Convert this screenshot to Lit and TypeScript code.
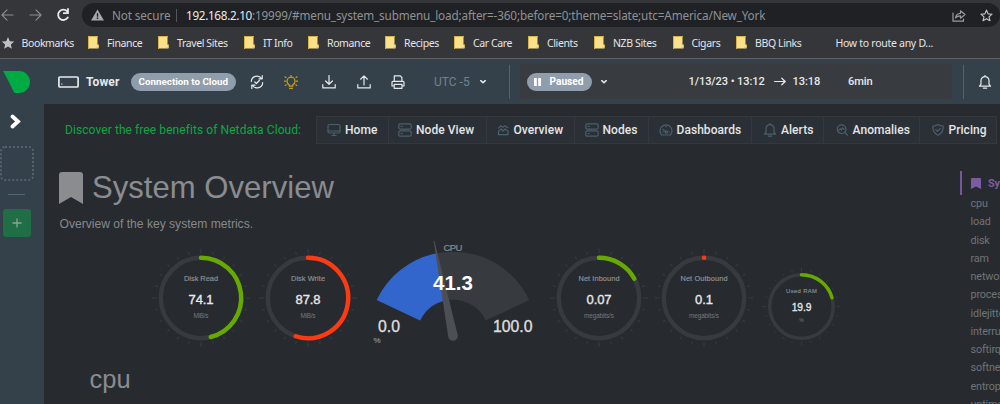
import { LitElement, html, svg, css } from "lit";
import { customElement, property } from "lit/decorators.js";

const BOOKMARKS = [
  { label: "Finance", width: 70 },
  { label: "Travel Sites", width: 86 },
  { label: "IT Info", width: 64 },
  { label: "Romance", width: 77 },
  { label: "Recipes", width: 69 },
  { label: "Car Care", width: 74 },
  { label: "Clients", width: 66 },
  { label: "NZB Sites", width: 78.5 },
  { label: "Cigars", width: 63.5 },
  { label: "BBQ Links", width: 80 },
];

const NAV = [
  { label: "Home", icon: "monitor", width: 71.5, pad: 10 },
  { label: "Node View", icon: "nodes", width: 98, pad: 9.5 },
  { label: "Overview", icon: "overview", width: 88.5, pad: 9 },
  { label: "Nodes", icon: "nodes", width: 74, pad: 9.5 },
  { label: "Dashboards", icon: "dashboard", width: 103, pad: 9.5 },
  { label: "Alerts", icon: "bell", width: 72, pad: 11 },
  { label: "Anomalies", icon: "anomalies", width: 96, pad: 10.5 },
  { label: "Pricing", icon: "shield", width: 76.5, pad: 10.5 },
];

const MENU = [
  "cpu", "load", "disk", "ram", "network", "processes",
  "idlejitter", "interrupts", "softirqs", "softnet", "entropy", "uptime",
];

const ICONS: Record<string, unknown> = {
  monitor: svg`<rect x="1" y="1.5" width="12" height="8.5" rx="1.5"/><path d="M1 8h12M5 12.5h4M7 10v2.5"/>`,
  nodes: svg`<rect x=".8" y=".8" width="12.4" height="5.3" rx="1.5"/><rect x=".8" y="7.9" width="12.4" height="5.3" rx="1.5"/><path d="M3.2 3.4h1M3.2 10.5h1"/>`,
  overview: svg`<path d="M2.5 5.2l2.2-2.4 2 1.6 2-1.6 3.3 2M2.5 8.4l2.6-2.4 2 2 2-2 2.9 2.2M2.5 8.4V11.6h9.5V8.2"/>`,
  dashboard: svg`<path d="M2.7 12a6 6 0 1 1 8.6 0zM4 6.5l3 2.6M7 3.2v.6M3.6 9h.6M9.8 9h.6"/><circle cx="7.4" cy="9" r="1.1"/>`,
  bell: svg`<path d="M1.5 11.2h11L11 9.2V5.6a4 4 0 0 0-8 0v3.6zM5.4 13.2h3.2M7 .4v1.2"/>`,
  anomalies: svg`<circle cx="6.6" cy="6.2" r="4.3"/><path d="M9.7 9.4l2.6 2.6M4 7.2l1.2-1.4 1.2 1 1.2-2 1.4 1.6"/>`,
  shield: svg`<path d="M7 1.6c1.7 1.1 3.4 1.5 5.2 1.4.2 4.2-1.2 7.4-5.2 9.3C3 10.4 1.6 7.2 1.8 3 3.6 3.1 5.3 2.7 7 1.6z"/><path d="M4.8 6.6l1.7 1.6 2.8-2.9"/>`,
  refresh: svg`<path d="M1.3 6.5A5.6 5.6 0 0 1 11.5 3.5M12.2.6v3.2H9M12.7 7.5A5.6 5.6 0 0 1 2.5 10.5M1.8 13.4v-3.2H5M4.8 7l1.6 1.5 2.9-3"/>`,
  bulb: svg`<path d="M5.2 9.8C3.6 8.9 3 7.7 3 6.2a4 4 0 0 1 8 0c0 1.5-.6 2.7-2.2 3.6v1.4H5.2zM5.6 13.3h2.8M7 .2v1M1 1.8l1 .8M13 1.8l-1 .8M.4 6.2h1.2M12.4 6.2h1.2M1.2 10.4l1-.6M12.8 10.4l-1-.6"/>`,
  download: svg`<path d="M7 .5v8.6M3.6 6L7 9.3 10.4 6M.8 9.6v3.3h12.4V9.6"/>`,
  upload: svg`<path d="M7 10V1M3.6 4.2L7 .9l3.4 3.3M.8 9.6v3.3h12.4V9.6"/>`,
  print: svg`<path d="M3.3 6.2V.9h6l1.6 1.6v3.7M2.8 11H1V7.3a1 1 0 0 1 1-1h10a1 1 0 0 1 1 1V11h-1.8M3.2 9.3h7.8v4H3.2z"/>`,
};

const icon = (name: string) =>
  html`<svg class="icon" viewBox="0 0 14 14" width="14" height="14">${ICONS[name]}</svg>`;

const caret = html`<svg class="icon caret" viewBox="0 0 6 4" width="6" height="4"><path d="M.8.6L3 2.8 5.2.6"/></svg>`;

const mark = (width: number, height: number) => html`
  <svg class="mark" viewBox="0 0 24 32" width=${width} height=${height} preserveAspectRatio="none">
    <path d="M0 32V3a3 3 0 0 1 3-3h18a3 3 0 0 1 3 3v29l-12-7z" />
  </svg>
`;

@customElement("pie-chart")
class PieChart extends LitElement {
  @property() label = "";
  @property() value = "";
  @property() units = "";
  @property() color = "#66aa00";
  @property({ type: Number }) angle = 0;
  @property({ type: Number }) size = 100;
  @property({ type: Number }) labelWidth = 34;
  @property({ type: Number }) valueWidth = 25;
  @property({ type: Number }) unitsWidth = 15;

  static styles = css`
    :host {
      display: block;
    }

    svg {
      display: block;
      overflow: visible;
      font-family: "Liberation Sans", Arial, sans-serif;
      text-anchor: middle;
    }

    .track,
    .bar {
      fill: none;
      stroke: #373a3f;
      stroke-width: 4.4;
    }

    .bar {
      stroke-linecap: round;
    }

    .tick {
      stroke: #3a3e43;
      stroke-width: 1;
    }

    .label {
      fill: #909397;
      stroke: #909397;
      stroke-width: 0.15;
      font-size: 7.4px;
    }

    .value {
      fill: #e8e9ea;
      stroke: #e8e9ea;
      stroke-width: 0.35;
      font-size: 13px;
    }

    .units {
      fill: #75787c;
      font-size: 6.4px;
    }
  `;

  render() {
    const ticks = Array.from({ length: 24 }, (_, i) => i);
    const rad = (this.angle * Math.PI) / 180;
    const x = 50 + 40.2 * Math.sin(rad);
    const y = 50 - 40.2 * Math.cos(rad);
    const large = this.angle > 180 ? 1 : 0;
    return html`
      <svg viewBox="0 0 100 100" width=${this.size} height=${this.size}>
        ${ticks.map(
          (i) => svg`<line class="tick" x1="50" x2="50"
            y1=${i % 6 ? 5.2 : 5.6} y2=${i % 6 ? 2.6 : 1}
            transform="rotate(${i * 15} 50 50)" />`
        )}
        <circle class="track" cx="50" cy="50" r="40.2" />
        <path class="bar" style="stroke: ${this.color}"
          d="M50 9.8A40.2 40.2 0 ${large} 1 ${x} ${y}" />
        <text class="label" x="50" y="32.5" textLength=${this.labelWidth}>${this.label}</text>
        <text class="value" x="50" y="56.3" textLength=${this.valueWidth}>${this.value}</text>
        <text class="units" x="50" y="69.8" textLength=${this.unitsWidth}>${this.units}</text>
      </svg>
    `;
  }
}

@customElement("cpu-gauge")
class CpuGauge extends LitElement {
  @property({ type: Number }) value = 0;

  static styles = css`
    :host {
      display: block;
    }

    svg {
      display: block;
      overflow: visible;
      font-family: "Liberation Sans", Arial, sans-serif;
    }

    .track {
      fill: #373a3f;
    }

    .fill {
      fill: #3366cc;
    }

    .needle {
      fill: #4c4f53;
    }

    .label,
    .units {
      fill: #888b8f;
      stroke: #888b8f;
      stroke-width: 0.2;
      font-size: 9.6px;
    }

    .units {
      font-size: 8px;
    }

    .value {
      fill: #fff;
      font-size: 20.5px;
      font-weight: bold;
    }

    .limit {
      fill: #dddedf;
      stroke: #dddedf;
      stroke-width: 0.35;
      font-size: 15.8px;
    }

    .middle {
      text-anchor: middle;
    }
  `;

  // ring sector from the left end of the scale up to the given share
  _sector(share: number) {
    const a = ((25.2 + share * 129.6) * Math.PI) / 180;
    const s = (25.2 * Math.PI) / 180;
    const at = (r: number, t: number) => `${80 - r * Math.cos(t)} ${96 - r * Math.sin(t)}`;
    return `M${at(84.3, s)}A84.3 84.3 0 0 1 ${at(84.3, a)}L${at(36.3, a)}A36.3 36.3 0 0 0 ${at(36.3, s)}Z`;
  }

  render() {
    const share = this.value / 100;
    return html`
      <svg viewBox="0 0 160 106" width="160" height="106">
        <path class="track" d=${this._sector(1)} />
        <path class="fill" d=${this._sector(share)} />
        <g class="needle" transform="rotate(${25.2 + share * 129.6 - 90} 80 96)">
          <path d="M75.2 96L79.6 -1h.8L84.8 96z" />
          <circle cx="80" cy="96" r="4.8" />
        </g>
        <text class="label middle" x="80" y="10.5" textLength="19">CPU</text>
        <text class="value middle" x="80" y="49.5">${this.value}</text>
        <text class="limit" x="5" y="91.8">0.0</text>
        <text class="limit" x="120" y="91.8">100.0</text>
        <text class="units" x="0.5" y="103">%</text>
      </svg>
    `;
  }
}

@customElement("app-root")
class AppRoot extends LitElement {
  static styles = css`
    :host {
      display: block;
      width: 1000px;
      height: 404px;
      overflow: hidden;
      background: #272b30;
      font-family: "Liberation Sans", Arial, sans-serif;
      white-space: nowrap;
    }

    svg {
      display: block;
      flex: none;
    }

    .icon {
      fill: none;
      stroke: currentColor;
      stroke-width: 1.2;
      stroke-linecap: round;
      stroke-linejoin: round;
    }

    .caret {
      stroke-width: 1.5;
    }

    /* browser */
    .browser {
      height: 58px;
      background: #35363a;
      border-bottom: 1px solid #606266;
      font-family: "Noto Sans", "Open Sans", sans-serif;
    }

    .toolbar {
      display: flex;
      align-items: center;
      height: 24px;
      padding-top: 3px;
    }

    .history {
      display: flex;
      align-items: center;
      width: 82px;
      color: #8b8d91;
    }

    .history svg {
      margin-left: 1px;
      margin-right: 14px;
    }

    .history .reload {
      color: #e8e9eb;
      margin: 0;
    }

    .address {
      display: flex;
      align-items: center;
      box-sizing: border-box;
      width: 918px;
      height: 24px;
      padding: 0 9px;
      border-radius: 12px;
      background: #202124;
      color: #8f9194;
      font-size: 11.7px;
    }

    .insecure {
      width: 64px;
      margin-left: 8px;
      letter-spacing: -0.1px;
    }

    .divider {
      width: 1px;
      height: 13px;
      background: #55575b;
      margin-right: 9px;
    }

    .url {
      flex: 1;
      letter-spacing: -0.13px;
    }

    .host {
      color: #e8eaed;
      letter-spacing: -0.3px;
    }

    .share {
      margin-right: 14px;
      color: #9a9c9f;
    }

    .fav {
      color: #c4c6c9;
      margin-right: -2px;
    }

    .bookmarks {
      display: flex;
      align-items: center;
      height: 31px;
      color: #e4e5e7;
      font-size: 10.5px;
      letter-spacing: -0.38px;
    }

    .starred {
      display: flex;
      align-items: center;
      gap: 7.5px;
      width: 86px;
      padding-left: 2px;
    }

    .folder {
      display: flex;
      align-items: center;
      gap: 8px;
    }

    .other {
      margin-left: 19.5px;
      letter-spacing: -0.28px;
    }

    /* top bar */
    .header {
      display: grid;
      grid-template-columns: 58px 28px 44.5px 119px 34.5px 38px 35px 34px 43px 46px 29px 10.5px 443px 15px 22px;
      align-items: center;
      height: 45px;
      background: #35414a;
      color: #e6e9eb;
      font-family: Roboto, "Liberation Sans", sans-serif;
    }

    .logo {
      margin-left: 3px;
    }

    .name {
      font-size: 12px;
      font-weight: bold;
      letter-spacing: 0.1px;
    }

    .pill {
      display: flex;
      align-items: center;
      justify-content: center;
      box-sizing: border-box;
      width: 105.5px;
      height: 18px;
      border-radius: 9px;
      background: #8f9dac;
      color: #fff;
      font-size: 9.8px;
      font-weight: bold;
    }

    .bulb {
      color: #d19e12;
    }

    .utc {
      color: #71818f;
      font-size: 12px;
    }

    .rule {
      width: 1px;
      height: 34px;
      background: #4f6371;
    }

    .period {
      display: grid;
      grid-template-columns: 74px 88px 85px 19px 55.5px 30px;
      align-items: center;
      box-sizing: border-box;
      width: 432px;
      height: 35px;
      padding-left: 7px;
      border-radius: 3px;
      background: #383b40;
      font-size: 11.1px;
      font-weight: 500;
      letter-spacing: -0.1px;
    }

    .paused {
      width: 65px;
      gap: 8px;
      font-size: 10.2px;
      letter-spacing: 0;
    }

    /* page */
    .page {
      display: flex;
      height: 300px;
    }

    .sidebar {
      display: flex;
      flex-direction: column;
      align-items: flex-start;
      width: 44px;
      height: 300px;
      background: #35414a;
      color: #fff;
      flex: none;
    }

    .expand {
      margin: 10px 0 0 10px;
    }

    .workspace {
      box-sizing: border-box;
      width: 34px;
      height: 35px;
      margin-top: 17px;
      border: 2px dotted #50636f;
      border-radius: 5px;
    }

    .line {
      width: 17px;
      height: 1px;
      margin: 13px 0 14px 8px;
      background: #526775;
    }

    .add {
      display: flex;
      align-items: center;
      justify-content: center;
      width: 28px;
      height: 28px;
      margin-left: 2.5px;
      border-radius: 3px;
      background: #1f6e46;
      color: #8ba497;
    }

    .main {
      width: 956px;
    }

    .cloud {
      display: flex;
      align-items: center;
      height: 28px;
      padding: 12px 0 0 21px;
      font-family: Roboto, "Liberation Sans", sans-serif;
    }

    .promo {
      width: 251px;
      color: #0da743;
      font-size: 12px;
      letter-spacing: 0.08px;
    }

    .tab {
      display: flex;
      align-items: center;
      gap: 4px;
      box-sizing: border-box;
      height: 28px;
      border: 1px solid #35393e;
      border-right: none;
      background: #2b3036;
      color: #4b5f6c;
      flex: none;
    }

    .tab span {
      color: #e3e5e6;
      font-size: 12px;
      font-weight: 500;
      letter-spacing: 0.05px;
    }

    .columns {
      display: flex;
    }

    .content {
      width: 916px;
      flex: none;
    }

    h1 {
      display: flex;
      align-items: center;
      gap: 9px;
      height: 34px;
      margin: 27px 0 0 15px;
      color: #8a8c90;
      font-size: 31.1px;
      font-weight: normal;
    }

    .mark {
      fill: currentColor;
    }

    .intro {
      margin: 10px 0 0 15.5px;
      color: #86888b;
      font-size: 12.1px;
      line-height: 18px;
    }

    .charts {
      display: flex;
      align-items: flex-start;
      height: 120px;
      margin-top: 7px;
      padding-left: 107px;
    }

    .charts pie-chart {
      margin-top: 8px;
    }

    .charts .write {
      margin-left: 6.5px;
    }

    .charts cpu-gauge {
      margin-left: 15px;
    }

    .charts .inbound {
      margin-left: 16px;
    }

    .charts .outbound {
      margin-left: 5.5px;
    }

    .charts .ram {
      margin: 27.2px 0 0 8px;
    }

    h2 {
      margin: 4px 0 0 45.5px;
      color: #8a8c90;
      font-size: 25.5px;
      font-weight: normal;
      line-height: 30px;
    }

    .menu {
      margin-top: 27px;
      color: #707377;
      font-family: Roboto, "Liberation Sans", sans-serif;
      font-size: 10.8px;
      letter-spacing: -0.15px;
    }

    .active {
      display: flex;
      align-items: center;
      gap: 7px;
      height: 24px;
      padding-left: 9px;
      border-left: 2px solid #75589b;
      color: #7b5ca3;
      font-weight: bold;
    }

    .entry {
      height: 18.25px;
      padding-left: 10.5px;
      line-height: 17px;
    }
  `;

  _browser() {
    return html`
      <div class="browser">
        <div class="toolbar">
          <div class="history">
            <svg class="icon" viewBox="0 0 14 14" width="13" height="14"><path d="M13 7H1.5M6.5 1.5L1 7l5.5 5.5" /></svg>
            <svg class="icon" viewBox="0 0 14 14" width="13" height="14"><path d="M1 7h11.5M7.5 1.5L13 7l-5.5 5.5" /></svg>
            <svg class="icon reload" viewBox="0 0 14 14" width="14" height="14"><path stroke-width="1.8" d="M11.8 9.5a5.2 5.2 0 1 1-.6-6.2M12 1v4.2H7.8" /></svg>
          </div>
          <div class="address">
            <svg viewBox="0 0 13 12" width="13" height="12"><path fill="#a6a8ab" d="M6.5.5L13 11.5H0z" /><path stroke="#202124" stroke-width="1.4" d="M6.5 4.2v3.5M6.5 8.6v1.4" /></svg>
            <span class="insecure">Not secure</span>
            <span class="divider"></span>
            <span class="url"><span class="host">192.168.2.10</span>:19999/#menu_system_submenu_load;after=-360;before=0;theme=slate;utc=America/New_York</span>
            <svg class="icon share" viewBox="0 0 14 13" width="14" height="13"><path d="M1 4v8.2h10.5V10M3.5 9c.4-3 2-4.6 5-4.7V1.8L13 5.5 8.5 9.2V6.8C6.3 6.8 4.7 7.4 3.5 9z" /></svg>
            <svg class="icon fav" viewBox="0 0 14 14" width="13" height="13"><path d="M7 1.2l1.7 4 4.3.4-3.3 2.8 1 4.2L7 10.4l-3.7 2.2 1-4.2L1 5.6l4.3-.4z" /></svg>
          </div>
        </div>
        <div class="bookmarks">
          <div class="starred">
            <svg viewBox="0 0 14 14" width="12" height="12"><path fill="#bfc1c5" d="M7 0l2.1 4.9 5.1.4-3.9 3.4 1.2 5L7 11.1l-4.5 2.6 1.2-5L-.2 5.3l5.1-.4z" /></svg>
            Bookmarks
          </div>
          ${BOOKMARKS.map(
            (item) => html`
              <div class="folder" style="width: ${item.width}px">
                <svg viewBox="0 0 11 13" width="11" height="13"><path fill="#fbe08a" d="M.5.5h9v8.2h1v3.8H.5z" /><path fill="#d9b24c" d="M0 0h10v1H1v12H0zM8.2 12h2.8V8.5h-1v3H8.2z" /></svg>
                ${item.label}
              </div>
            `
          )}
          <div class="other">How to route any D...</div>
        </div>
      </div>
    `;
  }

  _header() {
    return html`
      <div class="header">
        <svg class="logo" viewBox="0 0 27 22" width="27" height="22"><path fill="#00ab44" d="M0 0h16a11 11 0 0 1 0 22h-4.5C9 17.5 5.5 9.5 0 0z" /></svg>
        <svg class="icon" viewBox="0 0 21 12" width="21" height="12"><rect x=".9" y="1" width="19.2" height="10" rx="1" stroke-width="1.7" /><path d="M3.6 8h.4" /></svg>
        <span class="name">Tower</span>
        <span class="pill">Connection to Cloud</span>
        ${icon("refresh")}
        <span class="bulb">${icon("bulb")}</span>
        ${icon("download")} ${icon("upload")} ${icon("print")}
        <span class="utc">UTC -5</span>
        ${caret}
        <span class="rule"></span>
        <div class="period">
          <span class="pill paused">
            <svg viewBox="0 0 7 8" width="7" height="8"><path fill="#fff" d="M0 0h2.8v8H0zM4.2 0H7v8H4.2z" /></svg>
            Paused
          </span>
          ${caret}
          <span>1/13/23 • 13:12</span>
          <svg class="icon" viewBox="0 0 12 9" width="12" height="9"><path d="M.6 4.5h10.6M7.8 1.2l3.4 3.3-3.4 3.3" /></svg>
          <span>13:18</span>
          <span>6min</span>
        </div>
        <span class="rule"></span>
        ${icon("bell")}
      </div>
    `;
  }

  render() {
    return html`
      ${this._browser()} ${this._header()}
      <div class="page">
        <div class="sidebar">
          <svg class="expand" viewBox="0 0 11 15" width="11" height="15"><path fill="none" stroke="#fff" stroke-width="3.8" stroke-linecap="round" d="M2.5 2.5l5.5 5-5.5 5" /></svg>
          <div class="workspace"></div>
          <div class="line"></div>
          <div class="add">
            <svg viewBox="0 0 10 10" width="10" height="10"><path stroke="currentColor" stroke-width="1.3" d="M5 .5v9M.5 5h9" /></svg>
          </div>
        </div>
        <div class="main">
          <div class="cloud">
            <span class="promo">Discover the free benefits of Netdata Cloud:</span>
            ${NAV.map(
              (item) => html`
                <div class="tab" style="width: ${item.width}px; padding-left: ${item.pad}px">
                  ${icon(item.icon)}<span>${item.label}</span>
                </div>
              `
            )}
            <div class="tab"></div>
          </div>
          <div class="columns">
            <div class="content">
              <h1>${mark(24, 32)} System Overview</h1>
              <p class="intro">Overview of the key system metrics.</p>
              <div class="charts">
                <pie-chart label="Disk Read" value="74.1" units="MiB/s" angle="166"></pie-chart>
                <pie-chart class="write" label="Disk Write" value="87.8" units="MiB/s" color="#ff3912" angle="198"></pie-chart>
                <cpu-gauge value="41.3"></cpu-gauge>
                <pie-chart class="inbound" label="Net Inbound" value="0.07" units="megabits/s" angle="61.5" labelWidth="41" unitsWidth="30"></pie-chart>
                <pie-chart class="outbound" label="Net Outbound" value="0.1" units="megabits/s" color="#ff3912" angle="0.3" labelWidth="47" valueWidth="18" unitsWidth="30"></pie-chart>
                <pie-chart class="ram" label="Used RAM" value="19.9" units="%" angle="74" size="79" labelWidth="39" unitsWidth="5"></pie-chart>
              </div>
              <h2>cpu</h2>
            </div>
            <div class="menu">
              <div class="active">${mark(10, 11)} System Overview</div>
              ${MENU.map((name) => html`<div class="entry">${name}</div>`)}
            </div>
          </div>
        </div>
      </div>
    `;
  }
}
